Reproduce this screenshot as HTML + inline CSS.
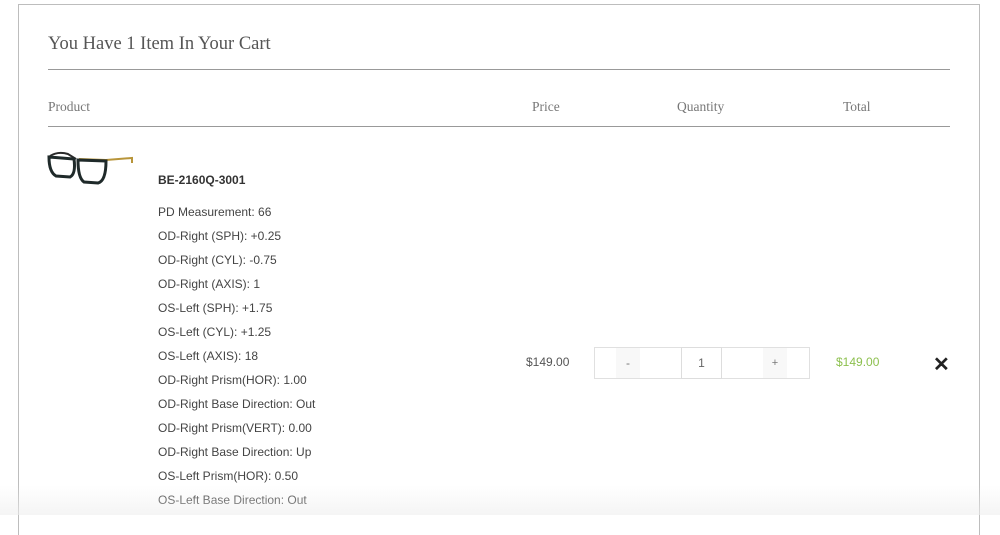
<!DOCTYPE html>
<html><head><style>
body{margin:0;width:1000px;height:515px;background:#fff;overflow:hidden;position:relative;font-family:"Liberation Sans",sans-serif}
.box{position:absolute;left:18px;top:4px;width:960px;height:530px;border:1px solid #bdbdbd;border-bottom:none}
.t{position:absolute;font-family:"Liberation Serif",serif;color:#555}
.hr{position:absolute;left:48px;width:902px;height:1px;background:#999}
.s{position:absolute;left:158px;font-size:12px;color:#444}
.shade{position:absolute;left:0;top:485px;width:1000px;height:30px;background:linear-gradient(rgba(245,245,245,0),rgba(238,238,238,.6))}
</style></head><body>
<div class="box"></div>
<div class="t" style="left:48px;top:34px;font-size:18.5px;color:#555">You Have 1 Item In Your Cart</div>
<div class="hr" style="top:69px"></div>
<div class="t" style="left:48px;top:99px;font-size:13.5px;color:#777">Product</div>
<div class="t" style="left:532px;top:99px;font-size:13.5px;color:#777">Price</div>
<div class="t" style="left:677px;top:99px;font-size:13.5px;color:#777">Quantity</div>
<div class="t" style="left:843px;top:99px;font-size:13.5px;color:#777">Total</div>
<div class="hr" style="top:126px"></div>
<svg style="position:absolute;left:46px;top:148px" width="90" height="40" viewBox="0 0 90 40">
<path d="M4 8 Q12 3 22 6 L30 11" stroke="#2a2a2a" stroke-width="2" fill="none"/>
<path d="M33 11 L60 12 L86 10 L86 15" stroke="#b8953a" stroke-width="2" fill="none"/>
<path d="M3 9 L28 11 Q30 26 24 29 L10 28 Q3 24 3 9Z" stroke="#1f2a2a" stroke-width="3" fill="none"/>
<path d="M32 12 L60 13 Q60 33 52 35 L38 34 Q32 30 32 12Z" stroke="#1f2a2a" stroke-width="3" fill="none"/>
</svg>
<div class="s" style="top:173px;font-weight:bold;color:#333">BE-2160Q-3001</div>
<div class="s" style="top:205px">PD Measurement: 66</div>
<div class="s" style="top:229px">OD-Right (SPH): +0.25</div>
<div class="s" style="top:253px">OD-Right (CYL): -0.75</div>
<div class="s" style="top:277px">OD-Right (AXIS): 1</div>
<div class="s" style="top:301px">OS-Left (SPH): +1.75</div>
<div class="s" style="top:325px">OS-Left (CYL): +1.25</div>
<div class="s" style="top:349px">OS-Left (AXIS): 18</div>
<div class="s" style="top:373px">OD-Right Prism(HOR): 1.00</div>
<div class="s" style="top:397px">OD-Right Base Direction: Out</div>
<div class="s" style="top:421px">OD-Right Prism(VERT): 0.00</div>
<div class="s" style="top:445px">OD-Right Base Direction: Up</div>
<div class="s" style="top:469px">OS-Left Prism(HOR): 0.50</div>
<div class="s" style="top:493px">OS-Left Base Direction: Out</div>
<div style="position:absolute;left:526px;top:355px;font-size:12px;color:#555">$149.00</div>
<div style="position:absolute;left:594px;top:347px;width:214px;height:30px;border:1px solid #e0e0e0"></div>
<div style="position:absolute;left:616px;top:348px;width:24px;height:30px;background:#f8f8f8;font-size:12px;color:#777;text-align:center;line-height:30px">-</div>
<div style="position:absolute;left:681px;top:347px;width:39px;height:30px;border:1px solid #ddd;font-size:12px;color:#666;text-align:center;line-height:30px">1</div>
<div style="position:absolute;left:763px;top:348px;width:24px;height:30px;background:#f8f8f8;font-size:11px;color:#777;text-align:center;line-height:30px">+</div>
<div style="position:absolute;left:836px;top:355px;font-size:12px;color:#8dc04f">$149.00</div>
<div style="position:absolute;left:933px;top:352px;font-size:20px;font-weight:bold;color:#222">✕</div>
<div class="shade"></div>
</body></html>
